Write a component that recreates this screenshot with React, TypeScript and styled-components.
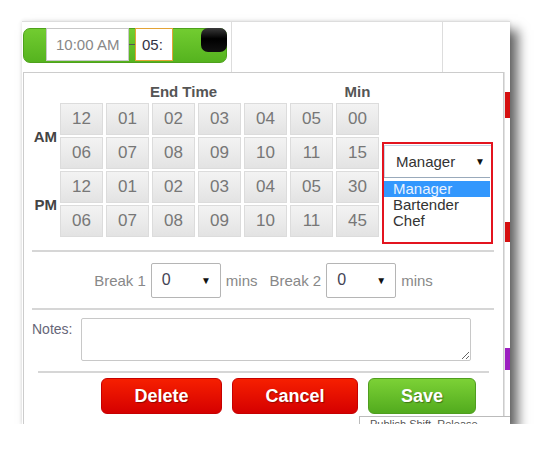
import React from 'react';
import styled, { createGlobalStyle } from 'styled-components';

const GlobalStyle = createGlobalStyle`
  body {
    margin: 0;
    background: #fff;
    font-family: "Liberation Sans", Arial, sans-serif;
  }
`;

const Frame = styled.div`
  position: relative;
  width: 488px;
  height: 403px;
  margin: 21px 0 0 22px;
  background: #fff;
  overflow: hidden;
  box-shadow: 8px 9px 11px rgba(0, 0, 0, 0.6), 0 0 4px rgba(0, 0, 0, 0.12);
`;

const TopRow = styled.div`
  display: grid;
  grid-template-columns: 210px 211px 1fr;
  height: 51px;
  border-top: 1px solid #ddd;
  box-sizing: border-box;
`;

const Cell = styled.div`
  border-right: 1px solid #ddd;
  padding: 6px 0 0 1px;
`;

const GreenBar = styled.div`
  display: flex;
  align-items: flex-start;
  width: 204px;
  height: 35px;
  box-sizing: border-box;
  padding-left: 22px;
  border-radius: 7px;
  border: 1px solid #4ea11c;
  background: linear-gradient(#72cc30, #55b31f);
`;

const TimeInput = styled.div<{ $active?: boolean }>`
  display: flex;
  align-items: center;
  height: 33px;
  box-sizing: border-box;
  margin-top: -1px;
  padding-left: ${p => (p.$active ? 6 : 9)}px;
  width: ${p => (p.$active ? 38 : 83)}px;
  background: #fff;
  border: 1px solid ${p => (p.$active ? '#e3a336' : '#c8c8c8')};
  color: ${p => (p.$active ? '#334' : '#888')};
  font-size: 15px;
`;

const Dash = styled.span`
  width: 6px;
  margin-top: 15px;
  height: 1px;
  background: #555;
`;

const Knob = styled.div`
  width: 26px;
  height: 24px;
  margin-left: auto;
  margin-top: -1px;
  margin-right: -1px;
  border-radius: 7px;
  background: linear-gradient(#3a3a3a, #000 45%, #111);
`;

const Body = styled.div`
  display: flex;
  height: 352px;
`;

const Panel = styled.div`
  width: 481px;
  margin-left: 1px;
  box-sizing: border-box;
  border: 1px solid #ccc;
  border-bottom: none;
  background: #fff;
`;

const Strip = styled.div`
  flex: 1;
  display: flex;
  flex-direction: column;
  border-left: 1px solid #e2e2e2;
`;

const StripMark = styled.div<{ $top: number; $color: string; $h: number }>`
  margin-top: ${p => p.$top}px;
  height: ${p => p.$h}px;
  background: ${p => p.$color};
`;

const TimeGrid = styled.div`
  display: grid;
  grid-template-columns: 33px repeat(7, 43px);
  grid-auto-rows: 32px;
  column-gap: 3px;
  row-gap: 2px;
`;

const HeadRow = styled.div`
  display: grid;
  grid-template-columns: 33px repeat(7, 43px);
  column-gap: 3px;
  height: 30px;
  align-items: center;
  font-size: 15px;
  font-weight: bold;
  color: #555;
`;

const HeadCell = styled.div<{ $from: number; $to: number; $shift?: number }>`
  grid-column: ${p => p.$from} / ${p => p.$to};
  text-align: center;
  padding-right: ${p => p.$shift ?? 0}px;
  padding-top: 6px;
`;

const Section = styled.div`
  display: flex;
  align-items: flex-start;
  height: 164px;
`;

const HalfLabel = styled.div<{ $row: number }>`
  grid-column: 1;
  grid-row: ${p => p.$row} / span 2;
  display: flex;
  align-items: center;
  justify-content: flex-end;
  font-size: 15px;
  font-weight: bold;
  color: #444;
`;

const TimeButton = styled.div`
  display: flex;
  align-items: center;
  justify-content: center;
  box-sizing: border-box;
  border: 1px solid #dcdcdc;
  background: linear-gradient(#f3f3f3, #e3e3e3);
  color: #777;
  font-size: 17px;
`;

const RoleBox = styled.div`
  flex-shrink: 0;
  width: 111px;
  height: 102px;
  box-sizing: border-box;
  margin: 69px 0 0 3px;
  border: 2px solid #e3141f;
  padding-top: 1px;
`;

const RoleSelect = styled.div`
  display: flex;
  align-items: center;
  justify-content: space-between;
  height: 32px;
  box-sizing: border-box;
  padding: 0 6px 0 11px;
  border-top: 1px solid #c6d4e6;
  border-left: 1px solid #c6d4e6;
  color: #333;
  font-size: 15px;
`;

const Arrow = styled.span`
  font-size: 10px;
  color: #111;
`;

const OptionList = styled.div`
  border-top: 1px solid #9ab;
  padding-top: 3px;
  margin-right: 1px;
`;

const Option = styled.div<{ $selected?: boolean }>`
  height: 16px;
  line-height: 16px;
  padding-left: 9px;
  font-size: 15px;
  background: ${p => (p.$selected ? '#3297fd' : 'transparent')};
  color: ${p => (p.$selected ? '#e8f2ff' : '#333')};
`;

const Rule = styled.div<{ $left: number; $right: number; $top?: number }>`
  margin: ${p => p.$top ?? 0}px ${p => p.$right}px 0 ${p => p.$left}px;
  border-top: 2px solid #d6d6d6;
`;

const BreakRow = styled.div`
  display: flex;
  align-items: center;
  justify-content: center;
  height: 56px;
  font-size: 15px;
  color: #888;
`;

const BreakLabel = styled.span<{ $gapLeft?: number }>`
  margin-left: ${p => p.$gapLeft ?? 0}px;
`;

const SmallSelect = styled.div`
  display: flex;
  align-items: center;
  justify-content: space-between;
  width: 70px;
  height: 35px;
  box-sizing: border-box;
  margin: 0 5px;
  padding: 0 9px 0 10px;
  border: 1px solid #b5b5b5;
  border-radius: 2px;
  color: #445;
  font-size: 16px;
`;

const NotesRow = styled.div`
  display: flex;
  align-items: flex-start;
  padding: 8px 0 10px 8px;
`;

const NotesLabel = styled.span`
  width: 49px;
  margin-top: 3px;
  font-size: 14px;
  color: #667;
`;

const NotesArea = styled.textarea`
  width: 390px;
  height: 43px;
  box-sizing: border-box;
  border: 1px solid #c8c8c8;
  border-radius: 2px;
  resize: both;
  font-family: inherit;
`;

const ActionRow = styled.div`
  display: flex;
  gap: 10px;
  padding: 5px 0 0 77px;
`;

const ActionButton = styled.div<{ $w: number; $green?: boolean }>`
  display: flex;
  align-items: center;
  justify-content: center;
  width: ${p => p.$w}px;
  height: 36px;
  box-sizing: border-box;
  border-radius: 6px;
  border: 1px solid ${p => (p.$green ? '#4f9d1f' : '#c60000')};
  background: ${p =>
    p.$green ? 'linear-gradient(#7cd136, #52ab1e)' : 'linear-gradient(#f61f00, #d50000)'};
  color: #fff;
  font-size: 18px;
  font-weight: bold;
  text-shadow: 1px 1px 1px rgba(0, 0, 0, 0.35);
`;

const Tooltip = styled.div`
  position: absolute;
  left: 337px;
  top: 395px;
  width: 160px;
  height: 20px;
  padding: 1px 0 0 10px;
  border: 1px solid #bbb;
  background: #fff;
  font-size: 11px;
  color: #555;
  white-space: nowrap;
`;

const rows = [
  ['12', '01', '02', '03', '04', '05', '00'],
  ['06', '07', '08', '09', '10', '11', '15'],
  ['12', '01', '02', '03', '04', '05', '30'],
  ['06', '07', '08', '09', '10', '11', '45'],
];

const roles = ['Manager', 'Bartender', 'Chef'];

export default function App() {
  return (
    <>
      <GlobalStyle />
      <Frame>
        <TopRow>
          <Cell>
            <GreenBar>
              <TimeInput>10:00 AM</TimeInput>
              <Dash />
              <TimeInput $active>05:</TimeInput>
              <Knob />
            </GreenBar>
          </Cell>
          <Cell />
          <div />
        </TopRow>
        <Body>
          <Panel>
            <Section>
              <div>
                <HeadRow>
                  <HeadCell $from={2} $to={8} $shift={26}>End Time</HeadCell>
                  <HeadCell $from={8} $to={9}>Min</HeadCell>
                </HeadRow>
                <TimeGrid>
                  <HalfLabel $row={1}>AM</HalfLabel>
                  <HalfLabel $row={3}>PM</HalfLabel>
                  {rows.map((row, r) =>
                    row.map((v, c) => (
                      <TimeButton key={`${r}-${c}`} style={{ gridRow: r + 1, gridColumn: c + 2 }}>
                        {v}
                      </TimeButton>
                    ))
                  )}
                </TimeGrid>
              </div>
              <RoleBox>
                <RoleSelect>
                  Manager <Arrow>▼</Arrow>
                </RoleSelect>
                <OptionList>
                  {roles.map((r, i) => (
                    <Option key={r} $selected={i === 0}>{r}</Option>
                  ))}
                </OptionList>
              </RoleBox>
            </Section>
            <Rule $left={8} $right={9} $top={13} />
            <BreakRow>
              <BreakLabel>Break 1</BreakLabel>
              <SmallSelect>0 <Arrow>▼</Arrow></SmallSelect>
              <BreakLabel>mins</BreakLabel>
              <BreakLabel $gapLeft={12}>Break 2</BreakLabel>
              <SmallSelect>0 <Arrow>▼</Arrow></SmallSelect>
              <BreakLabel>mins</BreakLabel>
            </BreakRow>
            <Rule $left={8} $right={9} />
            <NotesRow>
              <NotesLabel>Notes:</NotesLabel>
              <NotesArea />
            </NotesRow>
            <Rule $left={14} $right={14} />
            <ActionRow>
              <ActionButton $w={121}>Delete</ActionButton>
              <ActionButton $w={126}>Cancel</ActionButton>
              <ActionButton $w={108} $green>Save</ActionButton>
            </ActionRow>
          </Panel>
          <Strip>
            <StripMark $top={20} $h={26} $color="#d51010" />
            <StripMark $top={104} $h={20} $color="#d51010" />
            <StripMark $top={106} $h={22} $color="#9c1fc0" />
          </Strip>
        </Body>
        <Tooltip>Publish Shift, Release</Tooltip>
      </Frame>
    </>
  );
}
